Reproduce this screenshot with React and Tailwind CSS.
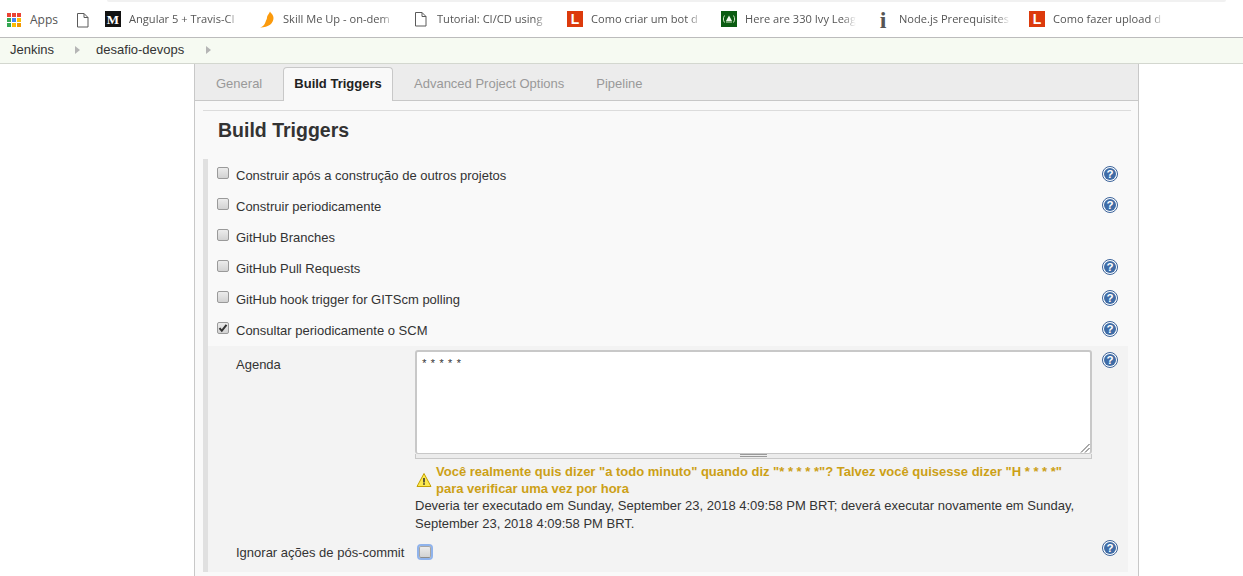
import React from "react";

const Doc = () => (
  <svg width="16" height="16" viewBox="0 0 16 16" className="shrink-0">
    <path d="M2.5 1.5h6.5l4 4v9.5h-10.5z M9 1.5v4h4" fill="#fff" stroke="#5a5a5a" strokeWidth="1" />
  </svg>
);
const AppsIcon = () => {
  const c = ["#ea4335","#ea4335","#ea4335","#34a853","#4285f4","#fbbc05","#34a853","#fbbc05","#f29900"];
  return (
    <span className="grid grid-cols-3 gap-[1px] w-[14px] h-[14px] shrink-0">
      {c.map((x, i) => <svg key={i} width="4" height="4"><rect width="4" height="4" fill={x} /></svg>)}
    </span>
  );
};
const MIcon = () => (
  <span className="w-4 h-4 bg-[#111] text-white flex items-center justify-center text-[13px] font-bold shrink-0 font-['Liberation_Serif',serif]">M</span>
);
const Flame = () => (
  <svg width="16" height="18" viewBox="0 0 16 18" className="shrink-0">
    <path d="M11 0.5 C11.5 2 14.5 3.5 14.5 7 C14.5 12 10 16.5 1 16.5 C4 15.5 5.5 14 6.5 11 C7 9 8 8.5 8 6.5 C8 4.5 10 3 11 0.5 Z" fill="#fb9a0c" />
  </svg>
);
const LIcon = () => (
  <span className="w-4 h-4 bg-[#dc3a0c] text-white flex items-center justify-center text-[14px] font-bold shrink-0 font-['Liberation_Sans',sans-serif]">L</span>
);
const GreenIcon = () => (
  <svg width="16" height="16" viewBox="0 0 16 16" className="shrink-0">
    <rect width="16" height="16" fill="#0b5c12" />
    <path d="M3.5 4.5C2 7 2 9 3.5 11.5M12.5 4.5C14 7 14 9 12.5 11.5" fill="none" stroke="#cfe8c4" strokeWidth="1" />
    <path d="M8 4.5l3 5.5h-6z" fill="#f1f8ec" />
    <rect x="5" y="10.5" width="6" height="1" fill="#cfe8c4" />
  </svg>
);
const InfoIcon = () => (
  <span className="w-4 h-5 flex items-center justify-center text-[24px] font-bold text-[#555] shrink-0 font-['Liberation_Serif',serif]">i</span>
);

const bookmarks = [
  [<MIcon />, "Angular 5 + Travis-CI"],
  [<Flame />, "Skill Me Up - on-dem"],
  [<Doc />, "Tutorial: CI/CD using"],
  [<LIcon />, "Como criar um bot d"],
  [<GreenIcon />, "Here are 330 Ivy Leag"],
  [<InfoIcon />, "Node.js Prerequisites"],
  [<LIcon />, "Como fazer upload d"],
];

const Help = () => (
  <svg width="16" height="16" viewBox="0 0 16 16" className="shrink-0">
    <circle cx="8" cy="8" r="7.5" fill="#fff" stroke="#3a6299" strokeWidth="1" />
    <circle cx="8" cy="8" r="6" fill="#3f6ca6" />
    <text x="8" y="12" textAnchor="middle" fontSize="11.5" fontWeight="700" fill="#fff" fontFamily="Liberation Sans, sans-serif">?</text>
  </svg>
);

const Check = ({ checked, focus }) => (
  <span className={`rounded-[2px] bg-gradient-to-b from-[#ececec] to-[#d2d2d2] flex items-center justify-center shrink-0 ${focus ? "w-[12px] h-[12px] border border-[#a5a5a5] border-b-[#8c8c8c] shadow-[0_0_0_2px_#8fb3ec]" : "w-3 h-3 border border-[#9a9a9a]"}`}>
    {checked && (
      <svg width="10" height="10" viewBox="0 0 10 10">
        <path d="M1.5 5.2l2.3 2.6L8.5 1.8" fill="none" stroke="#333" strokeWidth="2" />
      </svg>
    )}
  </span>
);

const Row = ({ label, help = true, checked }) => (
  <div className="h-[31px] flex items-center pl-[9px] pr-[10px]">
    <span className="-mt-[5px]"><Check checked={checked} /></span>
    <span className="ml-[7px] flex-1">{label}</span>
    <span className="-mt-[4px]">{help && <Help />}</span>
  </div>
);

export default function App() {
  return (
    <div className="h-[576px] overflow-hidden bg-white text-[13px] text-[#333] font-['Liberation_Sans',Arial,sans-serif]">
      <div className="h-[38px] relative border-b border-[#bcbcbc] bg-white flex items-center pl-[7px] pt-[2px] text-[11.1px] text-[#555] font-['Open_Sans',sans-serif]">
        <div className="absolute left-[107px] right-[17px] top-0 h-[2px] bg-[#f1f1f1] rounded-b" />
        <div className="w-[68px] flex items-center gap-[9px]">
          <AppsIcon />
          <span className="text-[12px]">Apps</span>
        </div>
        <div className="w-[30px]"><Doc /></div>
        {bookmarks.map(([icon, t], i) => (
          <div key={i} className="w-[154px] flex items-center gap-2">
            <span className="w-4 flex justify-center">{icon}</span>
            <span className="w-[111px] overflow-hidden whitespace-nowrap [mask-image:linear-gradient(to_right,#000_88%,transparent)]">{t}</span>
          </div>
        ))}
      </div>

      <div className="h-[26px] bg-[#f6faf2] border-b border-[#d3d7cf] flex items-center pl-[10px] text-[#333] pb-[1px]">
        <span>Jenkins</span>
        <span className="ml-[21px] mr-[16px] w-0 h-0 border-y-[4px] border-y-transparent border-l-[5px] border-l-[#b5b5b5]" />
        <span>desafio-devops</span>
        <span className="ml-[22px] w-0 h-0 border-y-[4px] border-y-transparent border-l-[5px] border-l-[#b5b5b5]" />
      </div>

      <div className="ml-[194px] w-[945px] h-[512px] border-x border-[#c8c8c8] bg-[#f9f9f9]">
        <div className="h-[37px] bg-[#ececec] border-b border-[#c8c8c8] flex items-center pl-[21px] text-[#999]">
          <span className="w-[67px] mt-[4px]">General</span>
          <span className="h-[34px] w-[110px] flex items-center justify-center pb-[2px] font-bold text-[#222] bg-[#f9f9f9] border border-b-0 border-[#c8c8c8] rounded-t-[4px] self-end -mb-px">Build Triggers</span>
          <span className="ml-[21px] mt-[4px]">Advanced Project Options</span>
          <span className="ml-[32px] mt-[4px]">Pipeline</span>
        </div>
        <div className="pl-[8px] pt-[9px] pr-[8px]">
          <div className="h-[2px] w-[928px] border-t border-[#dcdcdc]" />
          <h2 className="pl-[15px] mt-[6px] h-[24px] text-[19.5px] leading-[24px] font-bold text-[#333]">Build Triggers</h2>
          <div className="mt-[17px] border-l-[5px] border-[#e0e0e0] w-[925px] pt-[1px]">
            <Row label="Construir após a construção de outros projetos" />
            <Row label="Construir periodicamente" />
            <Row label="GitHub Branches" help={false} />
            <Row label="GitHub Pull Requests" />
            <Row label="GitHub hook trigger for GITScm polling" />
            <Row label="Consultar periodicamente o SCM" checked />
            <div className="bg-[#f3f3f3] h-[226px] pt-[4px] pr-[10px] flex flex-col">
              <div className="flex">
                <span className="w-[207px] pl-[28px] pt-[5px] shrink-0">Agenda</span>
                <div className="w-[677px] shrink-0">
                  <div className="relative h-[104px] bg-white border-2 border-[#c8c8c8] rounded-[3px] border-b-[1px] px-[4px] pt-[5px] text-[11px] leading-[14px] font-['Liberation_Mono',monospace] text-[#333] [word-spacing:-4.6px]">
                    * * * * *
                    <svg width="12" height="12" viewBox="0 0 12 12" className="absolute right-0 bottom-0">
                      <path d="M3 11.5L11.5 3M7 11.5L11.5 7" stroke="#555" strokeWidth="1" />
                    </svg>
                  </div>
                  <div className="h-[5px] border border-t-0 border-[#c8c8c8] bg-[#ececec] flex justify-center">
                    <div className="w-[27px] h-[3px] border-y border-[#999]" />
                  </div>
                  <div className="mt-[4px] flex text-[#cca016] font-bold leading-[17px]">
                    <svg width="16" height="16" viewBox="0 0 16 16" className="shrink-0 mt-[9px] ml-[1px]">
                      <path d="M8 1.5L15 14.5H1Z" fill="#fce94f" stroke="#c4a000" strokeWidth="1" strokeLinejoin="round" />
                      <rect x="7.2" y="6" width="1.6" height="4.5" fill="#333" />
                      <rect x="7.2" y="11.2" width="1.6" height="1.6" fill="#333" />
                    </svg>
                    <span className="ml-[4px] w-[640px]">Você realmente quis dizer "a todo minuto" quando diz "* * * * *"? Talvez você quisesse dizer "H * * * *" para verificar uma vez por hora</span>
                  </div>
                  <div className="leading-[18px] w-[677px]">Deveria ter executado em Sunday, September 23, 2018 4:09:58 PM BRT; deverá executar novamente em Sunday, September 23, 2018 4:09:58 PM BRT.</div>
                </div>
                <span className="ml-[10px] mt-[2px]"><Help /></span>
              </div>
              <div className="mt-[10px] flex items-center">
                <span className="w-[211px] pl-[28px] shrink-0">Ignorar ações de pós-commit</span>
                <span className="-mt-[2px]"><Check focus /></span>
                <span className="ml-auto -mt-[10px]"><Help /></span>
              </div>
            </div>
          </div>
        </div>
      </div>
    </div>
  );
}
